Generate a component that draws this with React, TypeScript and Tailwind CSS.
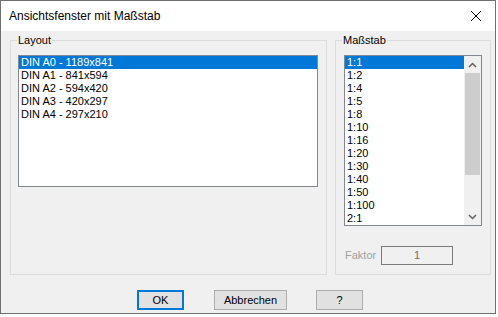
import React from "react";

const layouts = [
	"DIN A0 - 1189x841",
	"DIN A1 - 841x594",
	"DIN A2 - 594x420",
	"DIN A3 - 420x297",
	"DIN A4 - 297x210",
];

const scales = ["1:1", "1:2", "1:4", "1:5", "1:8", "1:10", "1:16", "1:20", "1:30", "1:40", "1:50", "1:100", "2:1"];

function GroupBox({ title, className, children }: { title: string; className: string; children: React.ReactNode }) {
	return (
		<div className={`relative border border-[#dcdcdc] ${className}`}>
			<span className="absolute left-[6px] top-[-8px] bg-[#f0f0f0] px-[1px] text-[11px] leading-[14px] text-black">
				{title}
			</span>
			{children}
		</div>
	);
}

function Row({ text, selected }: { text: string; selected?: boolean }) {
	return (
		<div
			className={`h-[13px] pl-[2px] text-[11px] leading-[13px] whitespace-nowrap ${
				selected ? "bg-[#0078d7] text-white" : "text-black"
			}`}
		>
			{text}
		</div>
	);
}

function Button({ label, focused, width }: { label: string; focused?: boolean; width: string }) {
	return (
		<button
			className={`h-[20px] ${width} bg-[#e1e1e1] text-[11px] leading-[16px] text-black ${
				focused ? "border-2 border-[#0078d7]" : "border border-[#adadad]"
			}`}
		>
			{label}
		</button>
	);
}

export default function App() {
	return (
		<div className="w-[498px] h-[317px] bg-white font-['Liberation_Sans',Arial,sans-serif]">
			<div className="w-[496px] h-[314px] border border-[#707070] bg-[#f0f0f0] flex flex-col">
				<div className="h-[30px] bg-white flex items-center justify-between pl-[8px] pr-[8px] shrink-0">
					<span className="text-[12px] text-black">Ansichtsfenster mit Maßstab</span>
					<svg width="20" height="20" viewBox="0 0 20 20" className="mr-[1px]">
						<path d="M5 5 L15 15 M15 5 L5 15" stroke="#000" strokeWidth="1" fill="none" />
					</svg>
				</div>
				<div className="flex pl-[9px] pt-[9px] gap-[8px]">
					<GroupBox title="Layout" className="w-[317px] h-[235px] pl-[7px] pt-[14px]">
						<div className="w-[300px] h-[132px] border border-[#828790] bg-white">
							{layouts.map((l, i) => (
								<Row key={l} text={l} selected={i === 0} />
							))}
						</div>
					</GroupBox>
					<GroupBox title="Maßstab" className="w-[156px] h-[235px] pl-[8px] pt-[14px]">
						<div className="w-[138px] h-[171px] border border-[#828790] bg-white flex">
							<div className="flex-1 pt-0">
								{scales.map((s, i) => (
									<Row key={s} text={s} selected={i === 0} />
								))}
							</div>
							<div className="w-[17px] bg-[#f0f0f0] flex flex-col">
								<div className="h-[17px] flex items-center justify-center">
									<svg width="9" height="6" viewBox="0 0 9 6">
										<path d="M1 5 L4.5 1.5 L8 5" stroke="#606060" strokeWidth="1.5" fill="none" />
									</svg>
								</div>
								<div className="h-[102px] mx-[1px] bg-[#cdcdcd]" />
								<div className="flex-1" />
								<div className="h-[17px] flex items-center justify-center">
									<svg width="9" height="6" viewBox="0 0 9 6">
										<path d="M1 1 L4.5 4.5 L8 1" stroke="#606060" strokeWidth="1.5" fill="none" />
									</svg>
								</div>
							</div>
						</div>
						<div className="flex items-center mt-[20px] ml-[1px]">
							<span className="w-[36px] text-[11px] text-[#a0a0a0]">Faktor</span>
							<div className="w-[72px] h-[19px] border border-[#7a7a7a] bg-[#f0f0f0] text-center text-[11px] leading-[17px] text-[#6d6d6d]">
								1
							</div>
						</div>
					</GroupBox>
				</div>
				<div className="flex pt-[15px] pl-[136px]">
					<Button label="OK" focused width="w-[47px]" />
					<div className="w-[30px]" />
					<Button label="Abbrechen" width="w-[73px]" />
					<div className="w-[29px]" />
					<Button label="?" width="w-[47px]" />
				</div>
			</div>
		</div>
	);
}
